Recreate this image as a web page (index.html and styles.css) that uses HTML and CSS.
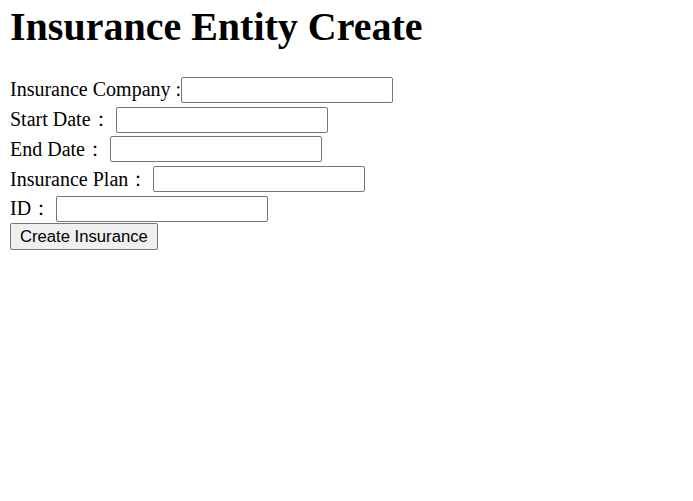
FILE: index.html
```html
<!DOCTYPE html>
<html lang="en">
<head>
<meta charset="utf-8">
<title>Insurance Entity Create</title>
<link rel="stylesheet" href="styles.css">
</head>
<body>
<main class="page">
  <h1 class="title">Insurance Entity Create</h1>
  <form class="form">
    <div class="row"><label class="label" for="company">Insurance Company :</label><input class="field" id="company" type="text"></div>
    <div class="row"><label class="label label--spaced" for="start">Start Date<span class="colon">：</span></label><input class="field" id="start" type="text"></div>
    <div class="row"><label class="label label--spaced" for="end">End Date<span class="colon">：</span></label><input class="field" id="end" type="text"></div>
    <div class="row"><label class="label label--spaced" for="plan">Insurance Plan<span class="colon">：</span></label><input class="field" id="plan" type="text"></div>
    <div class="row"><label class="label label--spaced" for="id">ID<span class="colon">：</span></label><input class="field" id="id" type="text"></div>
    <button class="submit" type="submit">Create Insurance</button>
  </form>
</main>
</body>
</html>
```
FILE: styles.css
```css
html, body {
  margin: 0;
  padding: 0;
  background: #ffffff;
}

body {
  font-family: "Liberation Serif", "Times New Roman", "Noto Sans CJK TC", serif;
  font-size: 20px;
  color: #000000;
}

.page {
  padding: 0 10px;
}

.title {
  margin: 0;
  padding-top: 3.5px;
  font-size: 40px;
  line-height: 46px;
  font-weight: bold;
}

.form {
  margin-top: 25.6px;
  display: flex;
  flex-direction: column;
  align-items: flex-start;
}

.row {
  display: flex;
  align-items: center;
  height: 29.75px;
}

.label {
  line-height: 23px;
  white-space: pre;
}

.colon {
  display: inline-block;
  width: 20px;
  text-align: center;
  font-family: "Liberation Serif", serif;
}

.label--spaced {
  margin-right: 5px;
}

.field {
  box-sizing: border-box;
  width: 212px;
  height: 26px;
  margin: 0;
  padding: 1px 2px;
  border: 1px solid #767676;
  border-radius: 2px;
  background: #ffffff;
  font-family: "Liberation Sans", Arial, sans-serif;
  font-size: 16.67px;
}

.submit {
  box-sizing: border-box;
  margin-top: -0.6px;
  height: 27px;
  padding: 0 9px;
  border: 1px solid #767676;
  border-radius: 2px;
  background: #efefef;
  color: #000000;
  font-family: "Liberation Sans", Arial, sans-serif;
  font-size: 16.67px;
  line-height: 25px;
}
```
